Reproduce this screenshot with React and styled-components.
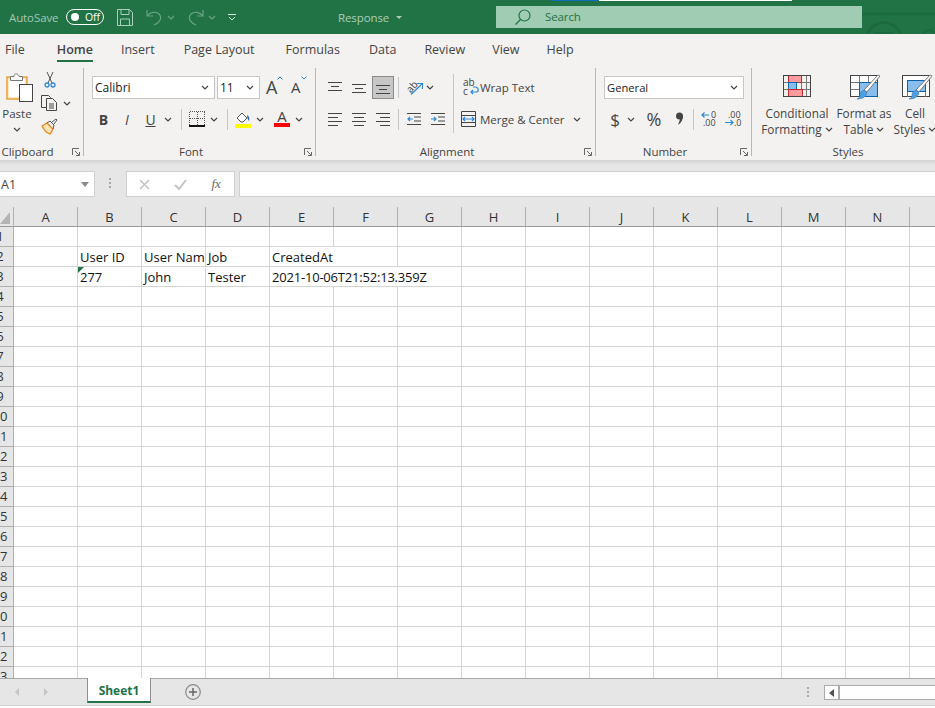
import React from "react";
import styled, { createGlobalStyle } from "styled-components";

const GlobalStyle = createGlobalStyle`
    html, body {
        margin: 0;
        padding: 0;
        background: #fff;
        overflow: hidden;
    }
    * {
        box-sizing: border-box;
    }
`;

const uiFont = `"Open Sans", "Noto Sans", sans-serif`;

const Chevron = ({ color = "#444" }) => (
    <svg width="8" height="5" viewBox="0 0 8 5" fill="none">
        <path d="M1 1l3 3 3-3" stroke={color} strokeWidth="1.2" />
    </svg>
);

const Launcher = () => (
    <svg width="8" height="8" viewBox="0 0 8 8" fill="none">
        <path d="M.5 7V.5H7M3 3l4 4M7.5 4v3.5H4" stroke="#666" />
    </svg>
);

const Lines = ({ rows, w = 14, h = 14, color = "#444" }) => (
    <svg width={w} height={h} viewBox={`0 0 ${w} ${h}`} fill="none">
        {rows.map(([a, b, y]) => (
            <path key={`${a}-${y}`} d={`M${a} ${y + 0.5}H${b}`} stroke={color} />
        ))}
    </svg>
);

const Brush = () => (
    <g>
        <path d="M30 1l-13 16-3-2L28 0z" fill="#fff" stroke="#777" />
        <path d="M14 15l3 3c-1 4-5 6-10 6 3-1 3-3 3-5 0-2 2-3 4-4z" fill="#4f9fe0" stroke="#2d7fc4" strokeWidth=".6" />
    </g>
);

const PasteIcon = () => (
    <svg width="28" height="31" viewBox="0 0 28 31" fill="none">
        <rect x="1" y="5" width="20" height="22" fill="#fde9c4" stroke="#ed9a2c" strokeWidth="1.4" />
        <rect x="3" y="7" width="16" height="18" fill="#fff" />
        <path d="M4.5 8.5V4.5h3.5C8 1 12.5 1 13 4.5h3.5v4z" fill="#fff" stroke="#777" />
        <rect x="13.5" y="12.5" width="13" height="17" fill="#fff" stroke="#444" />
    </svg>
);

const CutIcon = () => (
    <svg width="12" height="17" viewBox="0 0 12 17" fill="none">
        <path d="M3 1l5 11M9 1L4 12" stroke="#555" />
        <circle cx="3" cy="14" r="2" stroke="#2b88d8" strokeWidth="1.3" />
        <circle cx="9" cy="14" r="2" stroke="#2b88d8" strokeWidth="1.3" />
    </svg>
);

const CopyIcon = () => (
    <svg width="17" height="16" viewBox="0 0 17 16" fill="none">
        <path d="M5 12.5H.5V.5h7l2 2V4" stroke="#444" />
        <path d="M5.5 3.5h6l4 4v8h-10z" fill="#f3f2f1" stroke="#444" />
        <path d="M8 9h5M8 11h5M8 13h5" stroke="#444" />
    </svg>
);

const PainterIcon = () => (
    <svg width="17" height="17" viewBox="0 0 17 17" fill="none">
        <path d="M1 8l5-3 6 6-3 5C6 15 3 12 1 8z" fill="#fde3b5" stroke="#e8871e" strokeWidth="1.3" />
        <path d="M6 5l3-2 4 4-1 4" stroke="#555" />
        <path d="M11 4l4-3 1 1-3 4" stroke="#555" />
    </svg>
);

const BordersIcon = () => (
    <svg width="16" height="16" viewBox="0 0 16 16" fill="none" shapeRendering="crispEdges">
        <path d="M.5.5h15M.5.5v13M15.5.5v13M.5 7.5h15M8 .5v13" stroke="#555" strokeDasharray="1 1" />
        <path d="M0 15h16" stroke="#111" strokeWidth="1.5" />
    </svg>
);

const FillIcon = () => (
    <svg width="16" height="17" viewBox="0 0 16 17" fill="none">
        <path d="M2 7l5-5 5 5-4 4-2 0z" fill="#fff" stroke="#555" />
        <path d="M12 4c2 1 3 3 2 6-1-1-2-3-2-6z" fill="#2b6fb0" />
        <rect y="13" width="16" height="4" fill="#ffff00" />
    </svg>
);

const OrientIcon = () => (
    <svg width="17" height="17" viewBox="0 0 17 17" fill="none">
        <path d="M5 15.500L16 5M11 4.500h5.500V10" stroke="#2b88d8" strokeWidth="1.2" />
        <text x="0" y="12" fontFamily={uiFont} fontSize="10" fill="#444" transform="rotate(-50 5 8)">ab</text>
    </svg>
);

const OutdentIcon = ({ flip }) => (
    <svg width="14" height="14" viewBox="0 0 14 14" fill="none">
        <path d="M0 1.500h14M0 12.500h14M7 5h7M7 9h7" stroke="#444" />
        <path d={flip ? "M0 7h5M3 5l2 2-2 2" : "M6 7H1M3 5L1 7l2 2"} stroke="#2b88d8" strokeWidth="1.2" />
    </svg>
);

const WrapIcon = () => (
    <svg width="16" height="18" viewBox="0 0 16 18" fill="none">
        <text x="0" y="8" fontFamily={uiFont} fontSize="10" fill="#444">ab</text>
        <text x="0" y="17" fontFamily={uiFont} fontSize="10" fill="#444">c</text>
        <path d="M8 14h5c3 0 3-4 0-5h-3M10 12l-2 2 2 2" stroke="#2b88d8" strokeWidth="1.2" />
    </svg>
);

const MergeIcon = () => (
    <svg width="15" height="16" viewBox="0 0 15 16" fill="none">
        <path d="M.5.5h14v15H.5zM.5 4.500h14M.5 11.500h14" stroke="#444" />
        <path d="M2 8h11M4 6L2 8l2 2M11 6l2 2-2 2" stroke="#2b88d8" strokeWidth="1.2" />
    </svg>
);

const CommaIcon = () => (
    <svg width="9" height="14" viewBox="0 0 9 14" fill="none">
        <circle cx="4.500" cy="4" r="3.500" fill="#444" />
        <path d="M8 4c0 4-2 7-5 9 1-3 2-5 2-7z" fill="#444" />
    </svg>
);

const DecimalIcon = ({ more }) => (
    <svg width="17" height="18" viewBox="0 0 17 18" fill="none">
        <text x={more ? 3 : 10} y="8" fontFamily={uiFont} fontSize="9" fill="#444">{more ? ".00" : "0"}</text>
        <text x={more ? 9 : 2} y="16" fontFamily={uiFont} fontSize="9" fill="#444">{more ? ".0" : ".00"}</text>
        <path
            d={more ? "M0 12.500h8M5.500 10L8 12.500 5.500 15" : "M8 5H1M3.500 2.500L1 5l2.500 2.500"}
            stroke="#2b88d8"
            strokeWidth="1.2"
        />
    </svg>
);

const CondIcon = () => (
    <svg width="28" height="22" viewBox="0 0 28 22" fill="none">
        <path d="M.5 7.500h27M.5 14.500h27M5.500.5v21M18.500.5v21M23.500.5v21M13.500.5v21" stroke="#777" />
        <rect x="5.500" y=".5" width="13" height="7" fill="#ff9a9e" stroke="#c8262c" />
        <rect x="5.500" y="7.500" width="8" height="7" fill="#86bdec" stroke="#1068b5" />
        <rect x="5.500" y="14.500" width="14" height="7" fill="#ff9a9e" stroke="#c8262c" />
        <rect x=".5" y=".5" width="27" height="21" stroke="#444" />
    </svg>
);

const TableIcon = () => (
    <svg width="28" height="22" viewBox="0 0 28 22" fill="none" overflow="visible">
        <rect x=".5" y=".5" width="27" height="21" fill="#fff" stroke="#444" />
        <path d="M.5 7.500h27M.5 14.500h27M9.500.5v21M18.500.5v21" stroke="#777" />
        <rect x="9.500" y="7.500" width="18" height="14" fill="#89bdee" stroke="#0a64ad" />
        <Brush />
    </svg>
);

const CellStyleIcon = () => (
    <svg width="28" height="22" viewBox="0 0 28 22" fill="none" overflow="visible">
        <rect x=".5" y=".5" width="27" height="21" fill="#fff" stroke="#444" />
        <path d="M5.500 16v6M23.500 16v6" stroke="#777" />
        <rect x="5.500" y="5.500" width="18" height="11" fill="#89bdee" stroke="#0a64ad" />
        <Brush />
    </svg>
);

const Page = styled.div`
    width: 935px;
    height: 708px;
    display: flex;
    flex-direction: column;
    overflow: hidden;
    font-family: ${uiFont};
    background: #fff;
`;

const TitleBar = styled.div`
    position: relative;
    height: 34px;
    flex: none;
    display: flex;
    align-items: center;
    background: #217346;
    overflow: hidden;
    font-size: 11.5px;
    letter-spacing: -0.1px;
`;

const TopStrip = styled.div`
    position: absolute;
    top: 0;
    left: 551px;
    width: 241px;
    height: 1px;
    background: linear-gradient(to right, #0f6cbd 20%, #fff 20%);
`;

const Watermark = styled.svg`
    position: absolute;
    top: 0;
    right: 0;
`;

const AutoSave = styled.span`
    margin-left: 9px;
    width: 57px;
    color: #a3c9b4;
`;

const Toggle = styled.div`
    width: 38px;
    height: 16px;
    border: 1px solid #fff;
    border-radius: 8px;
    display: flex;
    align-items: center;
    gap: 6px;
    padding-left: 4px;
    color: #fff;
    font-size: 10.5px;
    &::before {
        content: "";
        flex: none;
        width: 8px;
        height: 8px;
        border-radius: 50%;
        background: #fff;
    }
`;

const QatSlot = styled.div`
    display: flex;
    align-items: center;
    margin-left: ${(p) => p.$ml}px;
`;

const DocName = styled.div`
    margin-left: 102px;
    width: 158px;
    display: flex;
    align-items: center;
    gap: 7px;
    color: #a9d0ba;
`;

const Caret = styled.span`
    width: 0;
    height: 0;
    border-left: 3px solid transparent;
    border-right: 3px solid transparent;
    border-top: 3px solid #a9d0ba;
`;

const SearchBox = styled.div`
    width: 366px;
    height: 22px;
    margin-top: -1px;
    display: flex;
    align-items: center;
    gap: 14px;
    padding-left: 19px;
    background: #a0ccb3;
    color: #217346;
`;

const TabRow = styled.div`
    height: 32px;
    flex: none;
    display: flex;
    background: #f3f2f1;
    font-size: 12.5px;
    color: #444;
`;

const Tab = styled.div`
    margin-left: ${(p) => p.$ml}px;
    height: 28px;
    line-height: 31px;
    white-space: nowrap;
    ${(p) => p.$active && "border-bottom: 2px solid #217346; font-weight: 600;"}
`;

const Ribbon = styled.div`
    height: 94px;
    flex: none;
    display: flex;
    background: #f3f2f1;
    overflow: hidden;
    font-size: 12.5px;
    color: #444;
`;

const Group = styled.div`
    position: relative;
    flex: none;
    width: ${(p) => p.$w}px;
    height: 88px;
    margin-top: 2px;
    display: flex;
    flex-direction: column;
    justify-content: space-between;
    ${(p) => !p.$last && "border-right: 1px solid #b8b8b8;"}
`;

const GroupBody = styled.div`
    display: flex;
    padding: 8px 0 0 ${(p) => p.$pl || 0}px;
`;

const GroupLabel = styled.div`
    height: 12px;
    line-height: 12px;
    margin-bottom: -2px;
    text-align: center;
    font-size: 11.5px;
    padding-right: ${(p) => p.$pr ?? 17}px;
`;

const LauncherSlot = styled.span`
    position: absolute;
    right: 3px;
    bottom: 0;
    line-height: 0;
`;

const Rows = styled.div`
    display: flex;
    flex-direction: column;
    gap: 10px;
    ${(p) => p.$w && `width: ${p.$w}px;`}
    ${(p) => p.$split && "border-right: 1px solid #c6c6c6; height: 59px; margin-top: -2px; padding-top: 2px;"}
`;

const Row = styled.div`
    height: 22px;
    display: flex;
    align-items: center;
`;

const Slot = styled.div`
    flex: none;
    width: ${(p) => p.$w}px;
    height: 22px;
    margin-left: ${(p) => p.$ml || 0}px;
    display: flex;
    align-items: center;
    justify-content: center;
    ${(p) => p.$on && "background: #c6c6c6; border: 1px solid #8a8a8a; height: 23px;"}
`;

const Glyph = styled.span`
    font-weight: ${(p) => (p.$b ? 700 : 400)};
    font-style: ${(p) => (p.$i ? "italic" : "normal")};
    text-decoration: ${(p) => (p.$u ? "underline" : "none")};
    font-size: ${(p) => p.$size || 13}px;
    color: #444;
`;

const RuleV = styled.div`
    flex: none;
    width: 1px;
    height: 21px;
    margin: 0 ${(p) => p.$mr || 0}px 0 ${(p) => p.$ml || 0}px;
    background: #c6c6c6;
`;

const Combo = styled.div`
    flex: none;
    width: ${(p) => p.$w}px;
    height: 23px;
    margin-left: ${(p) => p.$ml || 0}px;
    display: flex;
    align-items: center;
    justify-content: space-between;
    padding: 0 5px 0 2px;
    background: #fff;
    border: 1px solid #c6c6c6;
    color: #222;
    font-size: ${(p) => p.$size || 12}px;
`;

const PasteCol = styled.div`
    width: 34px;
    margin-top: -4px;
    display: flex;
    flex-direction: column;
    align-items: center;
    font-size: 11.5px;
    line-height: 17px;
    gap: 2px;
`;

const PasteArt = styled.span`
    height: 31px;
    margin-left: 5px;
    line-height: 0;
`;

const PasteChevron = styled.span`
    margin-top: 3px;
    line-height: 0;
`;

const ClipCol = styled.div`
    margin-left: 7px;
    margin-top: -5px;
    display: flex;
    flex-direction: column;
    align-items: flex-start;
    gap: 7px;
`;

const ClipRow = styled.div`
    display: flex;
    align-items: center;
    gap: 5px;
    line-height: 0;
    padding-left: ${(p) => p.$pl || 0}px;
`;

const GrowA = styled.div`
    flex: none;
    width: ${(p) => p.$w}px;
    margin-left: ${(p) => p.$ml}px;
    display: flex;
    align-items: flex-start;
    color: #444;
    font-size: ${(p) => p.$size}px;
    line-height: 22px;
`;

const TextAction = styled.div`
    display: flex;
    align-items: center;
    margin-left: ${(p) => p.$ml}px;
    font-size: 11.5px;
    white-space: nowrap;
`;

const BigBtn = styled.div`
    flex: none;
    width: ${(p) => p.$w}px;
    margin-left: ${(p) => p.$ml || 0}px;
    display: flex;
    flex-direction: column;
    align-items: center;
    font-size: 11.8px;
    line-height: 16px;
    white-space: nowrap;
`;

const BigIcon = styled.div`
    height: 22px;
    margin: -1px ${(p) => p.$mr || 0}px 8px 0;
    line-height: 0;
`;

const BigLine = styled.div`
    display: flex;
    align-items: center;
    gap: 3px;
`;

const Shadow = styled.div`
    height: 5px;
    flex: none;
    background: linear-gradient(#d4d4d4, #e6e6e6);
`;

const FormulaBar = styled.div`
    height: 42px;
    flex: none;
    display: flex;
    padding-top: 6px;
    background: #e6e6e6;
`;

const NameBox = styled.div`
    width: 95px;
    height: 26px;
    display: flex;
    align-items: center;
    justify-content: space-between;
    padding: 0 5px 0 1px;
    background: #fff;
    border: 1px solid #d0d0d0;
    border-left: none;
    font-size: 12.5px;
    color: #444;
`;

const Grip = styled.div`
    flex: none;
    width: 2px;
    height: 10px;
    margin: ${(p) => p.$mt}px ${(p) => p.$mr}px 0 ${(p) => p.$ml}px;
    background: repeating-linear-gradient(#a8a8a8 0 2px, transparent 2px 4px);
`;

const FormulaTools = styled.div`
    width: 109px;
    height: 26px;
    display: flex;
    align-items: center;
    background: #fff;
    border: 1px solid #d0d0d0;
`;

const ToolSlot = styled.div`
    flex: 1;
    display: flex;
    justify-content: center;
    font-family: "Liberation Serif", serif;
    font-style: italic;
    font-size: 13px;
    color: #666;
`;

const FormulaInput = styled.div`
    flex: 1;
    height: 26px;
    margin-left: 4px;
    background: #fff;
    border: 1px solid #d0d0d0;
    border-right: none;
`;

const Sheet = styled.div`
    flex: 1;
    min-height: 0;
    overflow: hidden;
    display: grid;
    grid-template-columns: 14px repeat(15, 64px);
    grid-template-rows: 20px;
    grid-auto-rows: 20px;
    align-content: start;
    font-size: 13px;
`;

const Corner = styled.div`
    background: #e6e6e6;
    border-right: 1px solid #b0b0b0;
    border-bottom: 1px solid #9a9a9a;
    padding-top: 5px;
    line-height: 0;
`;

const ColHead = styled.div`
    background: #e6e6e6;
    border-right: 1px solid #b0b0b0;
    border-bottom: 1px solid #9a9a9a;
    text-align: center;
    line-height: 21px;
    color: #333;
`;

const RowHead = styled.div`
    background: #e6e6e6;
    border-right: 1px solid #b0b0b0;
    border-bottom: 1px solid #b0b0b0;
    overflow: hidden;
    line-height: 19px;
    color: #333;
    span {
        display: block;
        width: 28px;
        margin-left: -14px;
        text-align: center;
    }
`;

const Cell = styled.div`
    position: relative;
    grid-column: span ${(p) => p.$span || 1};
    border-right: 1px solid #d4d4d4;
    border-bottom: 1px solid #d4d4d4;
    padding-left: 2px;
    overflow: hidden;
    white-space: nowrap;
    line-height: 20px;
    color: #111;
    ${(p) => p.$tight && "letter-spacing: -0.2px;"}
    ${(p) =>
        p.$flag &&
        `&::before {
            content: "";
            position: absolute;
            top: 0;
            left: 0;
            border-top: 6px solid #217346;
            border-right: 6px solid transparent;
        }`}
`;

const SheetBar = styled.div`
    height: 27px;
    flex: none;
    display: flex;
    background: #e6e6e6;
    border-top: 1px solid #a8a8a8;
`;

const NavArrow = styled.span`
    margin-left: ${(p) => p.$ml}px;
    margin-top: 9px;
    width: 0;
    height: 0;
    border-top: 4px solid transparent;
    border-bottom: 4px solid transparent;
    ${(p) => (p.$left ? "border-right" : "border-left")}: 4px solid #c4c4c4;
`;

const SheetTab = styled.div`
    flex: none;
    width: 64px;
    height: 25px;
    margin-left: 39px;
    margin-top: -1px;
    background: #fff;
    border-left: 1px solid #8f8f8f;
    border-right: 1px solid #8f8f8f;
    border-bottom: 2px solid #217346;
    text-align: center;
    line-height: 25px;
    font-size: 12px;
    font-weight: 700;
    color: #217346;
`;

const AddSheet = styled.div`
    margin: 5px 0 0 34px;
    line-height: 0;
`;

const ScrollTrack = styled.div`
    flex: 1;
    height: 15px;
    margin: 6px 0 0 15px;
    display: flex;
    background: #fff;
    border: 1px solid #ababab;
    border-right: none;
`;

const ScrollBtn = styled.div`
    width: 15px;
    display: flex;
    align-items: center;
    justify-content: center;
    border-right: 2px solid #ababab;
    &::before {
        content: "";
        border-top: 4px solid transparent;
        border-bottom: 4px solid transparent;
        border-right: 5px solid #555;
    }
`;

const FootLine = styled.div`
    height: 3px;
    flex: none;
    background: #fff;
    border-top: 1px solid #d0d0d0;
`;

const TABS = [
    { name: "File", ml: 5 },
    { name: "Home", ml: 32, active: true },
    { name: "Insert", ml: 28 },
    { name: "Page Layout", ml: 29 },
    { name: "Formulas", ml: 31 },
    { name: "Data", ml: 29 },
    { name: "Review", ml: 28 },
    { name: "View", ml: 27 },
    { name: "Help", ml: 27 },
];

const COLUMNS = "ABCDEFGHIJKLMNO".split("");

// cells that have content, keyed by row
const CONTENT = {
    2: [
        { col: 1, text: "User ID" },
        { col: 2, text: "User Name" },
        { col: 3, text: "Job" },
        { col: 4, text: "CreatedAt", span: 2 },
    ],
    3: [
        { col: 1, text: "277", flag: true },
        { col: 2, text: "John" },
        { col: 3, text: "Tester" },
        { col: 4, text: "2021-10-06T21:52:13.359Z", span: 3, tight: true },
    ],
};

const buildRow = (row) => {
    const items = CONTENT[row] || [];
    const cells = [];
    let col = 0;
    while (col < COLUMNS.length) {
        const item = items.find((c) => c.col === col);
        const span = item?.span || 1;
        cells.push(
            <Cell key={`${row}-${col}`} $span={span} $flag={item?.flag} $tight={item?.tight}>
                {item?.text}
            </Cell>
        );
        col += span;
    }
    return cells;
};

const App = () => {
    const rows = Array.from({ length: 23 }, (_, i) => i + 1);

    return (
        <Page>
            <GlobalStyle />
            <TitleBar>
                <TopStrip />
                <Watermark width="73" height="34" viewBox="0 0 73 34" fill="none">
                    <path d="M0 14h73" stroke="#1e6a40" strokeWidth="2.500" />
                    <circle cx="22" cy="40" r="17.500" stroke="#1e6a40" strokeWidth="3" />
                    <circle cx="67" cy="36" r="6" stroke="#1e6a40" strokeWidth="2.500" />
                    <path d="M13 33h18" stroke="#1e6a40" strokeWidth="2" />
                </Watermark>
                <AutoSave>AutoSave</AutoSave>
                <Toggle>Off</Toggle>
                <QatSlot $ml={13}>
                    <svg width="16" height="17" viewBox="0 0 16 17" fill="none">
                        <path d="M.5.5h12l3 3v13H.5zM4 .5v5h8v-5M3.500 16.500V10h9v6.500" stroke="#a9d0ba" />
                    </svg>
                </QatSlot>
                <QatSlot $ml={13}>
                    <svg width="16" height="17" viewBox="0 0 16 17" fill="none">
                        <path d="M1 1v6h6M1 7c3-4 9-5 12-2 3 3 2 8-5 11" stroke="#67a282" strokeWidth="1.200" />
                    </svg>
                </QatSlot>
                <QatSlot $ml={5}>
                    <Chevron color="#67a282" />
                </QatSlot>
                <QatSlot $ml={13}>
                    <svg width="16" height="17" viewBox="0 0 16 17" fill="none">
                        <path d="M15 1v6H9M15 7C12 3 6 2 3 5c-3 3-2 8 5 11" stroke="#67a282" strokeWidth="1.200" />
                    </svg>
                </QatSlot>
                <QatSlot $ml={4}>
                    <Chevron color="#67a282" />
                </QatSlot>
                <QatSlot $ml={12}>
                    <svg width="8" height="8" viewBox="0 0 8 8" fill="none">
                        <path d="M0 1.500h8M1 4l3 3 3-3" stroke="#d5e6dc" />
                    </svg>
                </QatSlot>
                <DocName>
                    Response
                    <Caret />
                </DocName>
                <SearchBox>
                    <svg width="16" height="16" viewBox="0 0 16 16" fill="none">
                        <circle cx="9.500" cy="6.500" r="5.500" stroke="#217346" strokeWidth="1.200" />
                        <path d="M5.500 10.500L.5 15.500" stroke="#217346" strokeWidth="1.200" />
                    </svg>
                    Search
                </SearchBox>
            </TitleBar>

            <TabRow>
                {TABS.map((t) => (
                    <Tab key={t.name} $ml={t.ml} $active={t.active}>
                        {t.name}
                    </Tab>
                ))}
            </TabRow>

            <Ribbon>
                <Group $w={84}>
                    <GroupBody>
                        <PasteCol>
                            <PasteArt>
                                <PasteIcon />
                            </PasteArt>
                            Paste
                            <PasteChevron>
                                <Chevron />
                            </PasteChevron>
                        </PasteCol>
                        <ClipCol>
                            <ClipRow $pl={3}>
                                <CutIcon />
                            </ClipRow>
                            <ClipRow>
                                <CopyIcon />
                                <Chevron />
                            </ClipRow>
                            <ClipRow>
                                <PainterIcon />
                            </ClipRow>
                        </ClipCol>
                    </GroupBody>
                    <GroupLabel $pr={28}>Clipboard</GroupLabel>
                    <LauncherSlot>
                        <Launcher />
                    </LauncherSlot>
                </Group>

                <Group $w={232}>
                    <GroupBody $pl={8}>
                        <Rows>
                            <Row>
                                <Combo $w={123}>
                                    Calibri
                                    <Chevron />
                                </Combo>
                                <Combo $w={43} $ml={2}>
                                    11
                                    <Chevron />
                                </Combo>
                                <GrowA $w={22} $ml={6} $size={18}>
                                    A
                                    <svg width="6" height="4" viewBox="0 0 6 4" fill="none">
                                        <path d="M.5 3.500L3 1l2.500 2.500" stroke="#2b88d8" />
                                    </svg>
                                </GrowA>
                                <GrowA $w={22} $ml={3} $size={15}>
                                    A
                                    <svg width="6" height="4" viewBox="0 0 6 4" fill="none">
                                        <path d="M.5.5L3 3 5.500.5" stroke="#2b88d8" />
                                    </svg>
                                </GrowA>
                            </Row>
                            <Row>
                                <Slot $w={23}>
                                    <Glyph $b $size={14}>B</Glyph>
                                </Slot>
                                <Slot $w={24}>
                                    <Glyph $i $size={14}>I</Glyph>
                                </Slot>
                                <Slot $w={23}>
                                    <Glyph $u $size={14}>U</Glyph>
                                </Slot>
                                <Slot $w={12}>
                                    <Chevron />
                                </Slot>
                                <RuleV $ml={7} $mr={7} />
                                <Slot $w={16}>
                                    <BordersIcon />
                                </Slot>
                                <Slot $w={12} $ml={3}>
                                    <Chevron />
                                </Slot>
                                <RuleV $ml={7} $mr={7} />
                                <Slot $w={16}>
                                    <FillIcon />
                                </Slot>
                                <Slot $w={12} $ml={3}>
                                    <Chevron />
                                </Slot>
                                <Slot $w={16} $ml={8}>
                                    <svg width="16" height="18" viewBox="0 0 16 18" fill="none">
                                        <text x="8" y="12" textAnchor="middle" fontFamily={uiFont} fontSize="15" fill="#444">A</text>
                                        <rect y="13" width="16" height="4" fill="#ff0000" />
                                    </svg>
                                </Slot>
                                <Slot $w={12} $ml={3}>
                                    <Chevron />
                                </Slot>
                            </Row>
                        </Rows>
                    </GroupBody>
                    <GroupLabel>Font</GroupLabel>
                    <LauncherSlot>
                        <Launcher />
                    </LauncherSlot>
                </Group>

                <Group $w={280}>
                    <GroupBody $pl={12}>
                        <Rows $w={126} $split>
                            <Row>
                                <Slot $w={14}>
                                    <Lines rows={[[0, 14, 2], [3, 11, 6], [0, 14, 10]]} />
                                </Slot>
                                <Slot $w={14} $ml={10}>
                                    <Lines rows={[[0, 14, 4], [3, 11, 8], [0, 14, 12]]} />
                                </Slot>
                                <Slot $w={22} $ml={6} $on>
                                    <Lines rows={[[0, 14, 5], [3, 11, 9], [0, 14, 13]]} />
                                </Slot>
                                <RuleV $ml={4} />
                                <Slot $w={17} $ml={7}>
                                    <OrientIcon />
                                </Slot>
                                <Slot $w={10} $ml={2}>
                                    <Chevron />
                                </Slot>
                            </Row>
                            <Row>
                                <Slot $w={14}>
                                    <Lines rows={[[0, 14, 1], [0, 10, 5], [0, 14, 9], [0, 10, 13]]} />
                                </Slot>
                                <Slot $w={14} $ml={10}>
                                    <Lines rows={[[0, 14, 1], [2, 12, 5], [0, 14, 9], [2, 12, 13]]} />
                                </Slot>
                                <Slot $w={14} $ml={10}>
                                    <Lines rows={[[0, 14, 1], [4, 14, 5], [0, 14, 9], [4, 14, 13]]} />
                                </Slot>
                                <RuleV $ml={8} />
                                <Slot $w={14} $ml={8}>
                                    <OutdentIcon />
                                </Slot>
                                <Slot $w={14} $ml={10}>
                                    <OutdentIcon flip />
                                </Slot>
                            </Row>
                        </Rows>
                        <Rows>
                            <Row>
                                <Slot $w={16} $ml={9}>
                                    <WrapIcon />
                                </Slot>
                                <TextAction $ml={1}>Wrap Text</TextAction>
                            </Row>
                            <Row>
                                <Slot $w={15} $ml={7}>
                                    <MergeIcon />
                                </Slot>
                                <TextAction $ml={4}>Merge &amp; Center</TextAction>
                                <Slot $w={10} $ml={7}>
                                    <Chevron />
                                </Slot>
                            </Row>
                        </Rows>
                    </GroupBody>
                    <GroupLabel>Alignment</GroupLabel>
                    <LauncherSlot>
                        <Launcher />
                    </LauncherSlot>
                </Group>

                <Group $w={156}>
                    <GroupBody $pl={8}>
                        <Rows>
                            <Row>
                                <Combo $w={140} $size={11.2}>
                                    General
                                    <Chevron />
                                </Combo>
                            </Row>
                            <Row>
                                <Slot $w={14} $ml={4}>
                                    <Glyph $size={17}>$</Glyph>
                                </Slot>
                                <Slot $w={10} $ml={4}>
                                    <Chevron />
                                </Slot>
                                <Slot $w={18} $ml={9}>
                                    <Glyph $size={18}>%</Glyph>
                                </Slot>
                                <Slot $w={9} $ml={12}>
                                    <CommaIcon />
                                </Slot>
                                <RuleV $ml={9} />
                                <Slot $w={17} $ml={7}>
                                    <DecimalIcon />
                                </Slot>
                                <Slot $w={17} $ml={7}>
                                    <DecimalIcon more />
                                </Slot>
                            </Row>
                        </Rows>
                    </GroupBody>
                    <GroupLabel>Number</GroupLabel>
                    <LauncherSlot>
                        <Launcher />
                    </LauncherSlot>
                </Group>

                <Group $w={192} $last>
                    <GroupBody $pl={10}>
                        <BigBtn $w={70}>
                            <BigIcon>
                                <CondIcon />
                            </BigIcon>
                            Conditional
                            <BigLine>
                                Formatting
                                <Chevron />
                            </BigLine>
                        </BigBtn>
                        <BigBtn $w={54} $ml={5}>
                            <BigIcon>
                                <TableIcon />
                            </BigIcon>
                            Format as
                            <BigLine>
                                Table
                                <Chevron />
                            </BigLine>
                        </BigBtn>
                        <BigBtn $w={46} $ml={1}>
                            <BigIcon $mr={-1}>
                                <CellStyleIcon />
                            </BigIcon>
                            Cell
                            <BigLine>
                                Styles
                                <Chevron />
                            </BigLine>
                        </BigBtn>
                    </GroupBody>
                    <GroupLabel $pr={0}>Styles</GroupLabel>
                </Group>
            </Ribbon>
            <Shadow />

            <FormulaBar>
                <NameBox>
                    A1
                    <svg width="8" height="5" viewBox="0 0 8 5">
                        <path d="M0 0h8L4 5z" fill="#8a8a8a" />
                    </svg>
                </NameBox>
                <Grip $mt={7} $ml={14} $mr={15} />
                <FormulaTools>
                    <ToolSlot>
                        <svg width="11" height="11" viewBox="0 0 11 11" fill="none">
                            <path d="M1 1l9 9M10 1l-9 9" stroke="#c4c4c4" strokeWidth="1.600" />
                        </svg>
                    </ToolSlot>
                    <ToolSlot>
                        <svg width="13" height="11" viewBox="0 0 13 11" fill="none">
                            <path d="M1 6l4 4 7-9" stroke="#c4c4c4" strokeWidth="2" />
                        </svg>
                    </ToolSlot>
                    <ToolSlot>fx</ToolSlot>
                </FormulaTools>
                <FormulaInput />
            </FormulaBar>

            <Sheet>
                <Corner>
                    <svg width="10" height="12" viewBox="0 0 10 12">
                        <path d="M0 12L10 0v12z" fill="#b4b4b4" />
                    </svg>
                </Corner>
                {COLUMNS.map((c) => (
                    <ColHead key={c}>{c}</ColHead>
                ))}
                {rows.map((r) => (
                    <React.Fragment key={r}>
                        <RowHead>
                            <span>{r}</span>
                        </RowHead>
                        {buildRow(r)}
                    </React.Fragment>
                ))}
            </Sheet>

            <SheetBar>
                <NavArrow $left $ml={15} />
                <NavArrow $ml={25} />
                <SheetTab>Sheet1</SheetTab>
                <AddSheet>
                    <svg width="16" height="16" viewBox="0 0 16 16" fill="none">
                        <circle cx="8" cy="8" r="7.300" stroke="#8a8a8a" strokeWidth="1.200" />
                        <path d="M8 4v8M4 8h8" stroke="#666" strokeWidth="1.500" />
                    </svg>
                </AddSheet>
                <Grip $mt={8} $ml={606} $mr={0} />
                <ScrollTrack>
                    <ScrollBtn />
                </ScrollTrack>
            </SheetBar>
            <FootLine />
        </Page>
    );
};

export default App;
